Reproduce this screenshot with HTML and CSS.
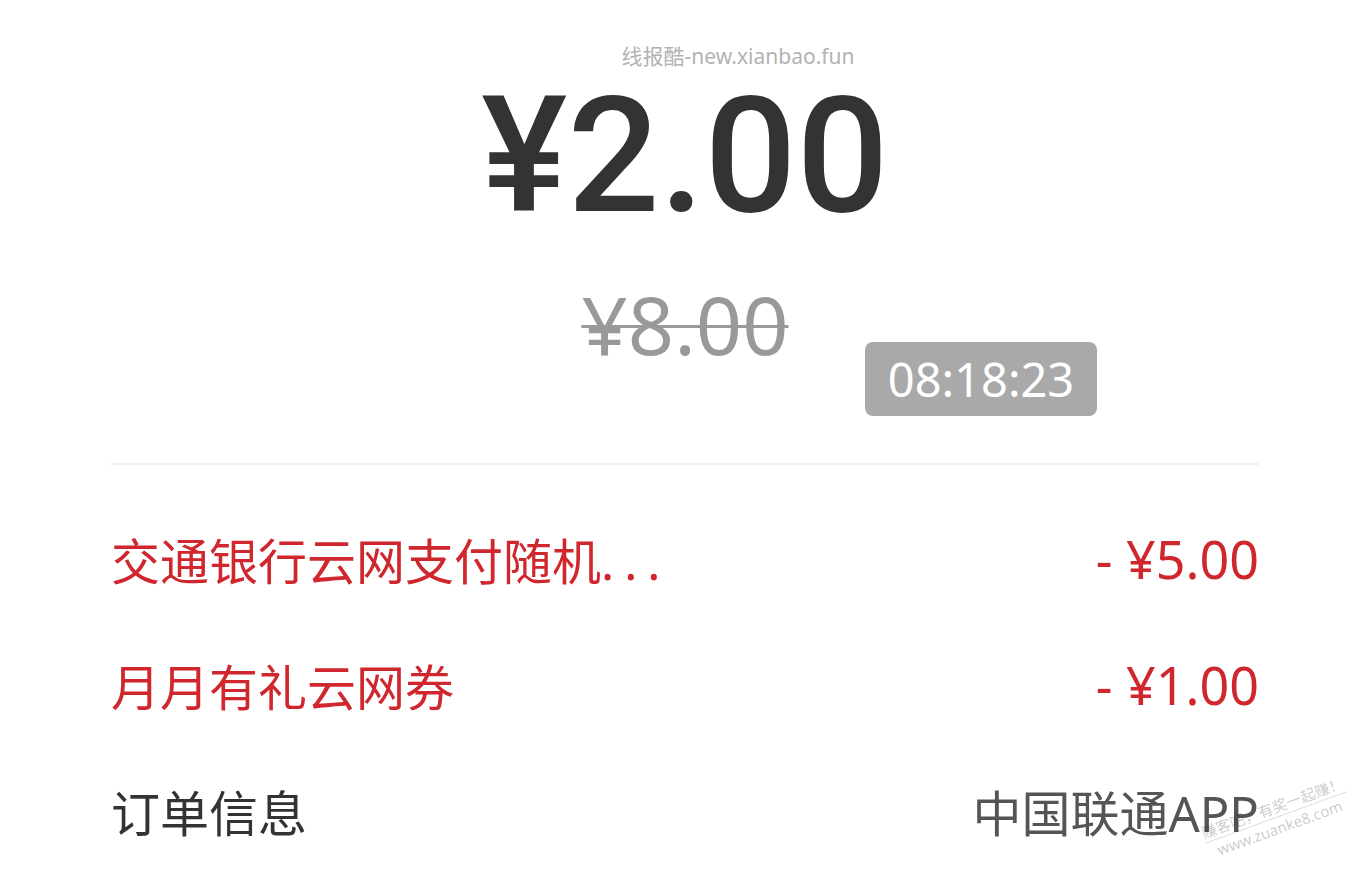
FILE: index.html
```html
<!DOCTYPE html>
<html lang="zh-CN">
<head>
    <meta charset="UTF-8">
    <meta name="viewport" content="width=device-width, initial-scale=1.0">
    <title>订单支付</title>
    <link rel="stylesheet" href="styles.css">
</head>
<body>
    <div class="page">
        <div class="head">
            <div class="mark">线报酷-new.xianbao.fun</div>
            <div class="price">¥2.00</div>
            <div class="origin">¥8.00</div>
            <div class="timer">08:18:23</div>
        </div>
        <ul class="list">
            <li class="red">
                <span>交通银行云网支付随机<span class="dots">...</span></span>
                <span class="num">- ¥5.00</span>
            </li>
            <li class="red">
                <span>月月有礼云网券</span>
                <span class="num">- ¥1.00</span>
            </li>
            <li class="info">
                <span>订单信息</span>
                <span class="from">中国联通APP</span>
                <div class="stamp">
                    <p>赚客吧，有奖一起赚！</p>
                    <p>www.zuanke8.com</p>
                </div>
            </li>
        </ul>
    </div>
</body>
</html>
```

FILE: styles.css
```css
body,ul,li,p{
    margin: 0;
    padding: 0;
    list-style: none;
}
body{
    background: #fff;
    font-family: "Noto Sans", "Noto Sans CJK SC", sans-serif;
    color: #333;
    overflow: hidden;
}
.page{
    width: 1148px;
    margin: 0 auto;
}
.head{
    position: relative;
    text-align: center;
    padding-bottom: 89px;
    border-bottom: 2px solid #f0f0f0;
}
.mark{
    padding-top: 45px;
    padding-left: 106px;
    font-size: 21px;
    line-height: 22px;
    color: #b3b3b3;
}
.price{
    font-family: Roboto, "Noto Sans", sans-serif;
    font-size: 162px;
    line-height: 178px;
    font-weight: 500;
    letter-spacing: 0;
    color: #333;
}
.origin{
    margin-top: 29px;
    font-size: 81px;
    line-height: 100px;
    color: #999;
    text-decoration: line-through;
    text-decoration-thickness: 3px;
}
.timer{
    position: absolute;
    left: 754px;
    top: 342px;
    width: 232px;
    height: 74px;
    line-height: 74px;
    border-radius: 8px;
    background: #a9a9a9;
    color: #fff;
    font-size: 47px;
    text-align: center;
}
.list{
    padding-top: 30px;
}
.list li{
    position: relative;
    display: flex;
    justify-content: space-between;
    align-items: center;
    height: 126px;
    font-size: 49px;
}
.dots{
    letter-spacing: 10px;
}
.red{
    color: #d0262d;
}
.num{
    font-size: 52px;
}
.info{
    color: #333;
}
.from{
    color: #555;
}
.stamp{
    position: absolute;
    right: -92px;
    top: 50px;
    transform: rotate(-20deg);
    font-size: 15px;
    line-height: 20px;
    color: rgba(0,0,0,0.22);
    text-align: center;
}
.stamp p:first-child{
    border-bottom: 1px solid rgba(0,0,0,0.15);
}
```
